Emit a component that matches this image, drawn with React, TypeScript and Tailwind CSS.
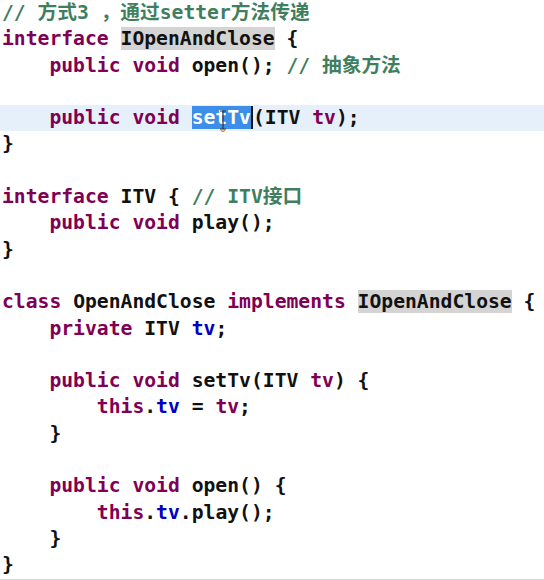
import React from "react";

// Eclipse-style Java editor snippet
type Tok = { t: string; c?: "k" | "c" | "f" | "n"; hl?: "occ" | "sel" };

const color: Record<string, string> = {
  k: "text-[#7f0055]",
  c: "text-[#3f7f5f]",
  f: "text-[#0000c0]",
  n: "text-[#111111]",
};

const lines: Tok[][] = [
  [{ t: "// 方式3 ，通过setter方法传递", c: "c" }],
  [
    { t: "interface ", c: "k" },
    { t: "IOpenAndClose", hl: "occ" },
    { t: " {" },
  ],
  [
    { t: "    public void ", c: "k" },
    { t: "open(); " },
    { t: "// 抽象方法", c: "c" },
  ],
  [],
  [
    { t: "    public void ", c: "k" },
    { t: "setTv", hl: "sel" },
    { t: "(ITV " },
    { t: "tv", c: "k" },
    { t: ");" },
  ],
  [{ t: "}" }],
  [],
  [
    { t: "interface ", c: "k" },
    { t: "ITV { " },
    { t: "// ITV接口", c: "c" },
  ],
  [
    { t: "    public void ", c: "k" },
    { t: "play();" },
  ],
  [{ t: "}" }],
  [],
  [
    { t: "class ", c: "k" },
    { t: "OpenAndClose " },
    { t: "implements ", c: "k" },
    { t: "IOpenAndClose", hl: "occ" },
    { t: " {" },
  ],
  [
    { t: "    private ", c: "k" },
    { t: "ITV " },
    { t: "tv", c: "f" },
    { t: ";" },
  ],
  [],
  [
    { t: "    public void ", c: "k" },
    { t: "setTv(ITV " },
    { t: "tv", c: "k" },
    { t: ") {" },
  ],
  [
    { t: "        this", c: "k" },
    { t: "." },
    { t: "tv", c: "f" },
    { t: " = " },
    { t: "tv", c: "k" },
    { t: ";" },
  ],
  [{ t: "    }" }],
  [],
  [
    { t: "    public void ", c: "k" },
    { t: "open() {" },
  ],
  [
    { t: "        this", c: "k" },
    { t: "." },
    { t: "tv", c: "f" },
    { t: ".play();" },
  ],
  [{ t: "    }" }],
  [{ t: "}" }],
];

function Token({ tok }: { tok: Tok }) {
  const cls = color[tok.c || "n"];
  if (tok.hl === "occ") {
    return <span className={`${cls} bg-[#d4d4d4]`}>{tok.t}</span>;
  }
  if (tok.hl === "sel") {
    return (
      <span className="relative bg-[#3d8ee8] text-white border-r-2 border-[#111]">
        {tok.t}
        {/* I-beam mouse cursor */}
        <svg
          className="absolute left-[28px] top-[4px]"
          width="6"
          height="22"
          viewBox="0 0 6 22"
        >
          <path d="M0 1h6M3 1v18M0 19h6" stroke="#333" strokeWidth="1.2" fill="none" />
          <path d="M1 20l2 2l2-2" stroke="#e08a2c" strokeWidth="1.2" fill="none" />
        </svg>
      </span>
    );
  }
  return <span className={cls}>{tok.t}</span>;
}

export default function App() {
  return (
    <div className="w-[544px] h-[580px] bg-white overflow-hidden flex flex-col">
      <div
        className="flex-1 pl-[2px] font-bold text-[19.7px] whitespace-pre"
        style={{ fontFamily: '"DejaVu Sans Mono", "Noto Sans CJK SC", monospace' }}
      >
        {lines.map((ln, i) => (
          <div
            key={i}
            className={`h-[26.3px] leading-[26.3px] ${i === 4 ? "bg-[#e6f0fb] -ml-[2px] pl-[2px]" : ""}`}
          >
            {ln.map((tok, j) => (
              <Token key={j} tok={tok} />
            ))}
          </div>
        ))}
      </div>
      <div className="h-[4px] bg-[#e6e6e6] border-t border-[#d8d8d8]" />
    </div>
  );
}
